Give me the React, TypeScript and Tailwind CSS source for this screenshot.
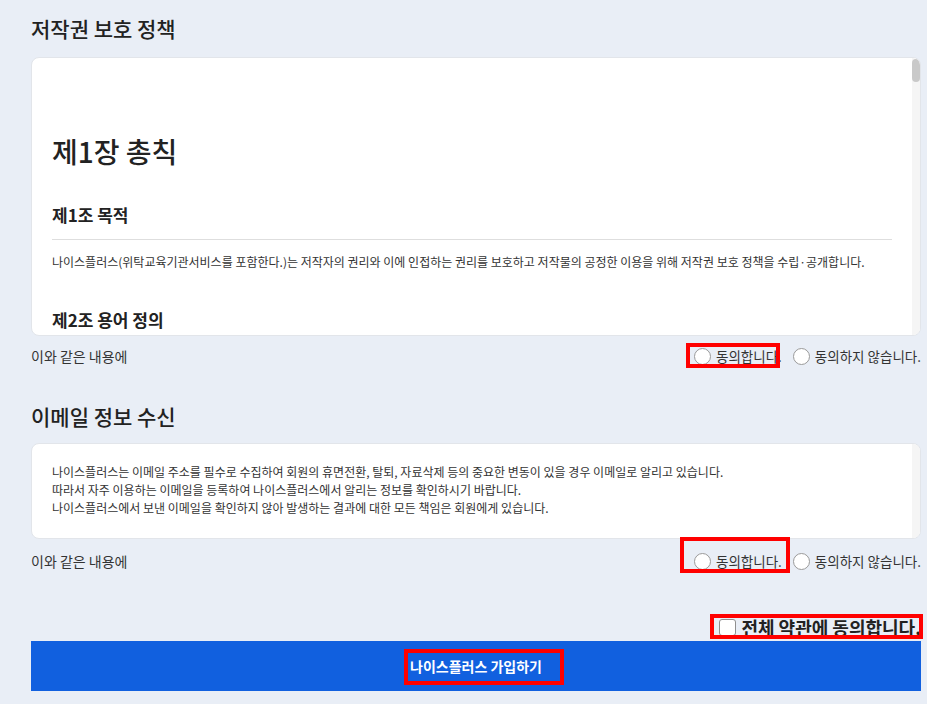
import type { ReactNode } from "react";

type Article = { title: string; lines: string[] };

const chapters: { title: string; articles: Article[] }[] = [
  {
    title: "제1장 총칙",
    articles: [
      {
        title: "제1조 목적",
        lines: [
          "나이스플러스(위탁교육기관서비스를 포함한다.)는 저작자의 권리와 이에 인접하는 권리를 보호하고 저작물의 공정한 이용을 위해 저작권 보호 정책을 수립·공개합니다.",
        ],
      },
      {
        title: "제2조 용어 정의",
        lines: [
          "① 이 정책에서 사용하는 용어의 정의는 다음과 같습니다.",
          "1. \"저작물\"이란 인간의 사상 또는 감정을 표현한 창작물을 말합니다.",
          "2. \"저작자\"란 저작물을 창작한 자를 말합니다.",
          "3. \"이용자\"란 나이스플러스에 접속하여 서비스를 이용하는 회원 및 비회원을 말합니다.",
          "4. \"게시물\"이란 이용자가 서비스에 게시한 부호, 문자, 음성, 화상, 동영상 등의 정보를 말합니다.",
        ],
      },
      {
        title: "제3조 적용 범위",
        lines: [
          "이 정책은 나이스플러스가 제공하는 모든 서비스와 그 서비스를 통해 게시·전송되는 저작물에 적용됩니다.",
          "위탁교육기관서비스를 통해 제공되는 콘텐츠에도 동일하게 적용됩니다.",
        ],
      },
    ],
  },
  {
    title: "제2장 저작권의 보호",
    articles: [
      {
        title: "제4조 저작권의 귀속",
        lines: [
          "① 나이스플러스가 작성한 저작물에 대한 저작권 및 기타 지식재산권은 나이스플러스에 귀속됩니다.",
          "② 이용자가 서비스 내에 게시한 게시물의 저작권은 해당 게시물의 저작자에게 귀속됩니다.",
          "③ 이용자는 서비스를 이용하여 얻은 정보를 사전 승낙 없이 복제, 송신, 출판, 배포, 방송 등의 방법으로 이용하여서는 안 됩니다.",
        ],
      },
      {
        title: "제5조 게시물의 이용",
        lines: [
          "① 나이스플러스는 서비스의 운영, 홍보 및 개선을 위하여 이용자의 게시물을 이용할 수 있습니다.",
          "② 게시물을 이용하는 경우 저작자의 성명을 표시하며, 게시물의 본질적인 내용을 변경하지 않습니다.",
          "③ 이용자는 언제든지 게시물의 이용 중단을 요청할 수 있습니다.",
        ],
      },
      {
        title: "제6조 이용자의 의무",
        lines: [
          "① 이용자는 타인의 저작권을 침해하는 게시물을 게시하여서는 안 됩니다.",
          "② 이용자는 저작물을 이용할 경우 출처를 명확히 표시하여야 합니다.",
          "③ 이용자가 본 조를 위반하여 발생하는 모든 책임은 이용자에게 있습니다.",
        ],
      },
    ],
  },
  {
    title: "제3장 저작권 침해의 처리",
    articles: [
      {
        title: "제7조 저작권 침해 신고",
        lines: [
          "① 자신의 저작권이 침해되었다고 판단되는 자는 나이스플러스에 해당 게시물의 게시 중단을 요청할 수 있습니다.",
          "② 게시 중단 요청은 권리자임을 증명하는 자료와 침해 사실을 소명하는 자료를 첨부하여야 합니다.",
        ],
      },
      {
        title: "제8조 침해 게시물의 처리",
        lines: [
          "① 게시 중단 요청을 받은 경우 지체 없이 해당 게시물의 게시를 중단하고 권리자와 게시자에게 그 사실을 통보합니다.",
          "② 게시자는 정당한 권리에 의한 게시임을 소명하여 게시의 재개를 요청할 수 있습니다.",
        ],
      },
      {
        title: "제9조 반복 침해자에 대한 조치",
        lines: [
          "나이스플러스는 저작권을 반복적으로 침해하는 이용자에 대하여 서비스 이용을 제한할 수 있습니다.",
        ],
      },
    ],
  },
  {
    title: "부칙",
    articles: [
      {
        title: "제10조 정책의 변경",
        lines: [
          "① 이 정책은 관련 법령 및 나이스플러스의 정책에 따라 변경될 수 있습니다.",
          "② 정책이 변경되는 경우 변경 내용과 시행일을 시행일 7일 전부터 서비스 화면에 공지합니다.",
        ],
      },
      {
        title: "제11조 시행일",
        lines: ["이 정책은 공지한 날부터 시행합니다."],
      },
    ],
  },
];

const emailLines = [
  "나이스플러스는 이메일 주소를 필수로 수집하여 회원의 휴면전환, 탈퇴, 자료삭제 등의 중요한 변동이 있을 경우 이메일로 알리고 있습니다.",
  "따라서 자주 이용하는 이메일을 등록하여 나이스플러스에서 알리는 정보를 확인하시기 바랍니다.",
  "나이스플러스에서 보낸 이메일을 확인하지 않아 발생하는 결과에 대한 모든 책임은 회원에게 있습니다.",
];

export default function App() {
  return (
    <div className="min-h-screen bg-[#e9eef6] pl-[31px] pr-[6px] pt-[14px] pb-[13px] font-['Noto_Sans_CJK_KR',sans-serif] text-[#222]">
      <h2 className="text-[21px] font-medium leading-[28px]">저작권 보호 정책</h2>

      <div className="mt-[15px] flex h-[279px] overflow-hidden rounded-lg border border-[#e2e5ea] bg-white">
        <div className="flex-1 overflow-hidden pl-5 pr-5 pt-[75px] pb-10">
          {chapters.map((chapter, ci) => (
            <section key={chapter.title} className={ci > 0 ? "mt-[48px]" : ""}>
              <h3 className="text-[28px] font-medium leading-[36px]">{chapter.title}</h3>
              {chapter.articles.map((article, ai) => (
                <div key={article.title} className={ai === 0 ? "mt-[34px]" : "mt-[37px]"}>
                  <h4 className="border-b border-[#dedede] pb-[12px] text-[17px] font-semibold leading-[24px]">
                    {article.title}
                  </h4>
                  <div className="mt-[13px] text-[12px] leading-[18px] text-[#333]">
                    {article.lines.map((line) => (
                      <p key={line}>{line}</p>
                    ))}
                  </div>
                </div>
              ))}
            </section>
          ))}
        </div>
        <ScrollTrack thumb />
      </div>

      <AgreeRow
        className="mt-2"
        agree={
          <Marked box="left-[-8px] right-[2px] top-[-1px] bottom-0">
            <Radio name="copyright" label="동의합니다." />
          </Marked>
        }
        name="copyright"
      />

      <h2 className="mt-[34px] text-[21px] font-medium leading-[28px]">이메일 정보 수신</h2>

      <div className="mt-[13px] flex h-[96px] overflow-hidden rounded-lg border border-[#e2e5ea] bg-white">
        <div className="flex-1 pl-5 pt-[19px] text-[12px] leading-[18px] text-[#333]">
          {emailLines.map((line) => (
            <p key={line}>{line}</p>
          ))}
        </div>
        <ScrollTrack />
      </div>

      <AgreeRow
        className="mt-[10px]"
        agree={
          <Marked box="left-[-14px] right-[-8px] top-[-12px] bottom-0">
            <Radio name="email" label="동의합니다." />
          </Marked>
        }
        name="email"
      />

      <div className="mt-[42px] flex h-6 justify-end">
        <Marked box="left-[-9px] right-[-2px] top-[-1px] bottom-0">
          <label className="flex h-6 items-center gap-[5px] text-[18px] font-bold">
            <input
              type="checkbox"
              className="size-[17px] appearance-none rounded-[3px] border border-[#8f8f8f] bg-white"
            />
            전체 약관에 동의합니다.
          </label>
        </Marked>
      </div>

      <button
        type="button"
        className="mt-[2px] flex h-[50px] w-full items-center justify-center bg-[#1160df] text-[14px] font-bold text-white"
      >
        <Marked box="left-[-6px] right-[-22px] top-[-7px] bottom-[-9px]">
          <span className="block leading-[20px]">나이스플러스 가입하기</span>
        </Marked>
      </button>
    </div>
  );
}

// thin custom scrollbar of the terms boxes
function ScrollTrack({ thumb = false }: { thumb?: boolean }) {
  return (
    <div className="w-2 shrink-0 bg-[#f5f5f5] pt-px">
      {thumb && <div className="h-[23px] rounded-full bg-[#c9c9c9]" />}
    </div>
  );
}

function AgreeRow({ className, agree, name }: { className: string; agree: ReactNode; name: string }) {
  return (
    <div className={`flex h-6 items-center justify-between text-[#333] ${className}`}>
      <span className="text-[14px]">이와 같은 내용에</span>
      <div className="flex items-center gap-[11px] text-[13.5px]">
        {agree}
        <Radio name={name} label="동의하지 않습니다." />
      </div>
    </div>
  );
}

function Radio({ name, label }: { name: string; label: string }) {
  return (
    <label className="flex h-6 items-center gap-[5px]">
      <input
        type="radio"
        name={name}
        className="size-[17px] appearance-none rounded-full border border-[#9a9a9a] bg-white"
      />
      {label}
    </label>
  );
}

// red highlight frames drawn over the marked controls
function Marked({ box, children }: { box: string; children: ReactNode }) {
  return (
    <span className="relative block">
      {children}
      <span className={`pointer-events-none absolute border-4 border-[#ff0000] ${box}`} />
    </span>
  );
}
